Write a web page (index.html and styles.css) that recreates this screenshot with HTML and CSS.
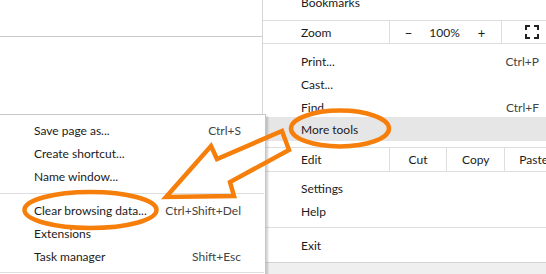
FILE: index.html
```html
<!DOCTYPE html>
<html>
<head>
<meta charset="utf-8">
<link rel="stylesheet" href="styles.css">
</head>
<body>
<div class="page">
  <div class="toolbar"></div>
</div>

<div class="menu main-menu">
  <div class="item"><span>Bookmarks</span></div>
  <div class="zoom-row">
    <div class="label">Zoom</div>
    <div class="zoom-ctrl">
      <span class="zbtn">−</span>
      <span class="zval">100%</span>
      <span class="zbtn">+</span>
    </div>
    <div class="full">
      <svg width="14" height="14" viewBox="0 0 14 14"><path d="M1 5V1h4M9 1h4v4M13 9v4H9M5 13H1V9" fill="none" stroke="#222" stroke-width="2"/></svg>
    </div>
  </div>
  <div class="group g-print">
    <div class="item"><span>Print...</span><span class="key">Ctrl+P</span></div>
    <div class="item"><span>Cast...</span></div>
    <div class="item"><span>Find</span><span class="key">Ctrl+F</span></div>
    <div class="item hover"><span>More tools</span></div>
  </div>
  <div class="edit-row">
    <div class="label">Edit</div>
    <div class="ecell">Cut</div>
    <div class="ecell">Copy</div>
    <div class="ecell">Paste</div>
  </div>
  <div class="group g-settings">
    <div class="item"><span>Settings</span></div>
    <div class="item"><span>Help</span></div>
  </div>
  <div class="sep sep-exit"></div>
  <div class="group g-exit">
    <div class="item"><span>Exit</span></div>
  </div>
</div>

<div class="menu sub-menu">
  <div class="item"><span>Save page as...</span><span class="key">Ctrl+S</span></div>
  <div class="item"><span>Create shortcut...</span></div>
  <div class="item"><span>Name window...</span></div>
  <div class="sep sep-a"></div>
  <div class="item"><span>Clear browsing data...</span><span class="key">Ctrl+Shift+Del</span></div>
  <div class="item"><span>Extensions</span></div>
  <div class="item"><span>Task manager</span><span class="key">Shift+Esc</span></div>
  <div class="sep sep-b"></div>
</div>

<svg class="annot" width="546" height="274" viewBox="0 0 546 274">
  <ellipse cx="340" cy="128.5" rx="49" ry="18" fill="none" stroke="#f67f0c" stroke-width="4.5"/>
  <ellipse cx="90.5" cy="210" rx="66" ry="18" fill="none" stroke="#f67f0c" stroke-width="4.5"/>
  <polygon points="166,197 211,146 217,159 282,131 289,150 230,182 234,196" fill="none" stroke="#f67f0c" stroke-width="4.5" stroke-linejoin="miter"/>
</svg>
</body>
</html>
```
FILE: styles.css
```css
html, body {
  margin: 0;
  padding: 0;
}
body {
  width: 546px;
  height: 274px;
  overflow: hidden;
  position: relative;
  background: #efefef;
  font-family: Lato, "Liberation Sans", sans-serif;
  font-size: 12px;
  color: #1b1b1b;
}
.page {
  height: 262px;
  background: #fff;
}
.toolbar {
  height: 36px;
  border-bottom: 1px solid #cacaca;
}

.menu {
  position: absolute;
  background: #fff;
  box-sizing: border-box;
}
.item {
  height: 23px;
  line-height: 23px;
  display: flex;
  justify-content: space-between;
  white-space: nowrap;
}
.key {
  color: #444;
}
.sep {
  height: 1px;
  background: #dedede;
}

/* main menu */
.main-menu {
  left: 262px;
  top: -9px;
  width: 300px;
  border-left: 1px solid #d6d6d6;
  border-bottom: 1px solid #d4d4d4;
  padding-bottom: 5px;
}
.main-menu .item {
  padding: 0 23px 0 38px;
}
.main-menu .item.hover {
  background: #e6e6e6;
  height: 24px;
  line-height: 26px;
  margin-top: -2px;
}
.zoom-row, .edit-row {
  display: flex;
  border-top: 1px solid #dedede;
  border-bottom: 1px solid #dedede;
}
.zoom-row {
  margin-top: 6px;
  height: 22px;
  line-height: 24px;
}
.edit-row {
  margin-top: 6px;
  height: 23px;
  line-height: 24px;
}
.label {
  width: 88px;
  padding-left: 38px;
}
.zoom-ctrl {
  width: 111px;
  border-left: 1px solid #dedede;
  display: grid;
  grid-template-columns: 37px 35px 39px;
  text-align: center;
}
.zbtn {
  font-size: 13px;
}
.full {
  flex: 1;
  border-left: 1px solid #dedede;
  display: flex;
  align-items: center;
  justify-content: center;
  padding-right: 1px;
}
.full svg {
  display: block;
}
.ecell {
  width: 57px;
  border-left: 1px solid #dedede;
  text-align: center;
}
.g-print {
  margin-top: 6px;
}
.g-settings {
  margin-top: 5px;
}
.sep-exit {
  margin-top: 4px;
}
.g-exit {
  margin-top: 6px;
}

/* sub menu */
.sub-menu {
  left: -30px;
  top: 114px;
  width: 296px;
  border: 1px solid #c6c6c6;
  padding: 4px 0 20px;
  box-shadow: 2px 2px 2px rgba(0, 0, 0, 0.18);
}
.sub-menu .item {
  padding: 0 24px 0 63px;
}
.sub-menu .sep {
  margin-right: 1px;
}
.sep-a {
  margin: 5px 0;
}
.sep-b {
  margin: 4px 0 6px;
}

.annot {
  position: absolute;
  left: 0;
  top: 0;
  pointer-events: none;
}
```
